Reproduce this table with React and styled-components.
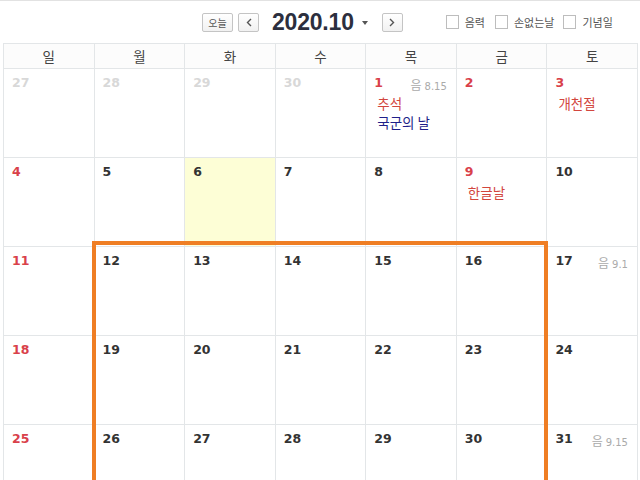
import React from 'react'
import styled, { createGlobalStyle } from 'styled-components'

const GlobalStyle = createGlobalStyle`
  body {
    margin: 0;
    background: #fff;
    font-family: "Noto Sans CJK KR", "DejaVu Sans", sans-serif;
  }
`

const Page = styled.div`
  width: 640px;
  height: 480px;
  overflow: hidden;
  border-top: 1px solid #e2e2e2;
  box-sizing: border-box;
`

const Toolbar = styled.div`
  height: 42px;
  display: flex;
  align-items: center;
  padding-left: 202px;
  box-sizing: border-box;
`

const NavGroup = styled.div`
  display: flex;
  align-items: center;
`

const SmallButton = styled.button`
  height: 19px;
  min-width: ${p => p.$w || 21}px;
  padding: 0;
  margin-right: ${p => p.$mr || 0}px;
  border: 1px solid #c4c4c4;
  border-radius: 2px;
  background: linear-gradient(#fff, #f1f1f1);
  color: #555;
  font-family: "Noto Sans CJK KR", sans-serif;
  font-size: 10px;
  line-height: 17px;
  display: flex;
  align-items: center;
  justify-content: center;
`

const Title = styled.div`
  font-family: "Liberation Sans", Arial, sans-serif;
  font-weight: bold;
  font-size: 23px;
  color: #2c2f3e;
  margin-left: 13px;
  letter-spacing: -0.2px;
`

const Caret = styled.span`
  width: 0;
  height: 0;
  border-left: 3.5px solid transparent;
  border-right: 3.5px solid transparent;
  border-top: 4px solid #555;
  margin: 2px 14px 0 8px;
`

const Options = styled.div`
  display: flex;
  align-items: center;
  margin-left: 43px;
`

const Option = styled.label`
  display: flex;
  align-items: center;
  margin-right: ${p => p.$mr}px;
  font-size: 11px;
  color: #555;
`

const Box = styled.span`
  width: 11px;
  height: 12px;
  border: 1px solid #bdbdbd;
  background: #fff;
  margin-right: 6px;
`

const Calendar = styled.div`
  position: relative;
  margin-left: 3px;
  width: 634px;
  display: grid;
  grid-template-columns: repeat(7, 1fr);
  grid-template-rows: 25px repeat(5, 89px);
  border-top: 1px solid #e3e6e8;
  border-left: 1px solid #e3e6e8;
`

const DayName = styled.div`
  border-right: 1px solid #e3e6e8;
  border-bottom: 1px solid #e3e6e8;
  display: flex;
  align-items: center;
  justify-content: center;
  font-size: 13.5px;
  color: #444;
  background: #fcfcfc;
`

const Cell = styled.div`
  position: relative;
  border-right: 1px solid #e3e6e8;
  border-bottom: 1px solid #e3e6e8;
  background: ${p => (p.$today ? '#fdfed6' : '#fff')};
  padding: 6px 8px 0 8px;
  box-sizing: border-box;
`

const Num = styled.div`
  font-family: "DejaVu Sans", Verdana, sans-serif;
  font-weight: bold;
  font-size: 12.5px;
  line-height: 16px;
  color: ${p => p.$color};
`

const Lunar = styled.span`
  position: absolute;
  top: 7px;
  right: 9px;
  font-size: 10px;
  color: #aaa;
  font-family: "DejaVu Sans", "Noto Sans CJK KR", sans-serif;
  b {
    font-family: "Noto Sans CJK KR", sans-serif;
    font-weight: normal;
    font-size: 12px;
    margin-right: 3px;
  }
`

const Event = styled.div`
  margin-left: 3px;
  margin-top: ${p => (p.$first ? 3 : 0)}px;
  font-size: 13.5px;
  line-height: 19px;
  color: ${p => (p.$navy ? '#1f1f8a' : '#d2463e')};
`

const Highlight = styled.div`
  position: absolute;
  left: 88px;
  top: 197px;
  width: 456px;
  height: 300px;
  border: 4px solid #ef7e24;
  box-sizing: border-box;
  pointer-events: none;
`

const days = ['일', '월', '화', '수', '목', '금', '토']

const cells = [
  { n: 27, muted: true }, { n: 28, muted: true }, { n: 29, muted: true }, { n: 30, muted: true },
  { n: 1, red: true, lunar: '8.15', events: [['추석'], ['국군의 날', true]] },
  { n: 2, red: true },
  { n: 3, red: true, events: [['개천절']] },
  { n: 4, red: true }, { n: 5 }, { n: 6, today: true }, { n: 7 }, { n: 8 },
  { n: 9, red: true, events: [['한글날']] }, { n: 10 },
  { n: 11, red: true }, { n: 12 }, { n: 13 }, { n: 14 }, { n: 15 }, { n: 16 }, { n: 17, lunar: '9.1' },
  { n: 18, red: true }, { n: 19 }, { n: 20 }, { n: 21 }, { n: 22 }, { n: 23 }, { n: 24 },
  { n: 25, red: true }, { n: 26 }, { n: 27 }, { n: 28 }, { n: 29 }, { n: 30 }, { n: 31, lunar: '9.15' },
]

const numColor = c => (c.muted ? '#d8d8d8' : c.red ? '#d9414a' : '#333')

export default function App() {
  return (
    <Page>
      <GlobalStyle />
      <Toolbar>
        <NavGroup>
          <SmallButton $w={31} $mr={5}>오늘</SmallButton>
          <SmallButton>
            <svg width="6" height="9" viewBox="0 0 6 9"><path d="M5 1 L1.5 4.5 L5 8" stroke="#555" strokeWidth="1.4" fill="none" /></svg>
          </SmallButton>
          <Title>2020.10</Title>
          <Caret />
          <SmallButton>
            <svg width="6" height="9" viewBox="0 0 6 9"><path d="M1 1 L4.5 4.5 L1 8" stroke="#555" strokeWidth="1.4" fill="none" /></svg>
          </SmallButton>
        </NavGroup>
        <Options>
          <Option $mr={10}><Box />음력</Option>
          <Option $mr={9}><Box />손없는날</Option>
          <Option $mr={0}><Box />기념일</Option>
        </Options>
      </Toolbar>
      <Calendar>
        {days.map(d => <DayName key={d}>{d}</DayName>)}
        {cells.map((c, i) => (
          <Cell key={i} $today={c.today}>
            <Num $color={numColor(c)}>{c.n}</Num>
            {c.lunar && <Lunar><b>음</b>{c.lunar}</Lunar>}
            {c.events && c.events.map(([t, navy], j) => (
              <Event key={t} $first={j === 0} $navy={navy}>{t}</Event>
            ))}
          </Cell>
        ))}
        <Highlight />
      </Calendar>
    </Page>
  )
}
